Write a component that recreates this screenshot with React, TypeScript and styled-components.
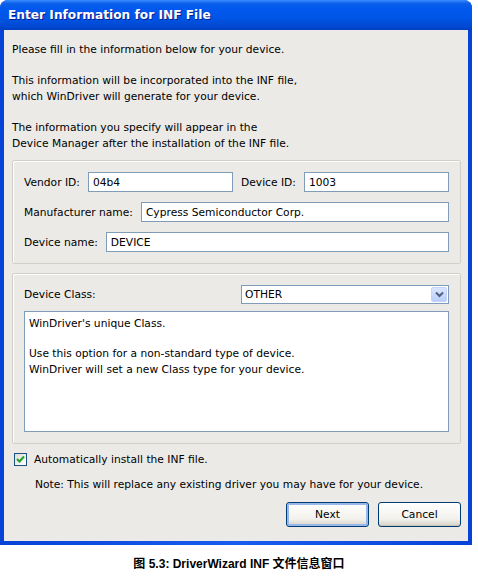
import styled, { createGlobalStyle } from 'styled-components';

const GlobalStyle = createGlobalStyle`
  html, body {
    margin: 0;
    padding: 0;
    background: #ffffff;
  }
  body {
    font-family: 'DejaVu Sans', Verdana, sans-serif;
    font-size: 10.7px;
    color: #000;
  }
`;

const Page = styled.div`
  width: 478px;
  height: 577px;
  display: flex;
  flex-direction: column;
`;

const Window = styled.div`
  width: 472px;
  border-radius: 8px 8px 0 0;
  background: linear-gradient(to right, #0742d6, #1a5cf0 50%, #0742d6);
  padding: 0 4px 4px 4px;
  box-sizing: border-box;
  display: flex;
  flex-direction: column;
`;

const TitleBar = styled.div`
  height: 30px;
  margin: 0 -4px;
  border-radius: 8px 8px 0 0;
  background: linear-gradient(
    to bottom,
    #3c8cff 0%,
    #0a5fe8 12%,
    #0058ee 30%,
    #0055e5 60%,
    #0049d2 88%,
    #003dc0 100%
  );
  display: flex;
  align-items: center;
  padding-left: 8px;
`;

const Title = styled.div`
  color: #ffffff;
  font-family: 'DejaVu Sans', Verdana, sans-serif;
  font-weight: bold;
  font-size: 12.2px;
  text-shadow: 1px 1px 0 #0a1e8c;
`;

const Client = styled.div`
  background: #ebeae7;
  padding: 12px 7px 14px 8px;
  display: flex;
  flex-direction: column;
`;

const Para = styled.p`
  margin: 0 0 15px 0;
  line-height: 16px;
  &:last-of-type {
    margin-bottom: 8px;
  }
`;

const Group = styled.div<{ $gap?: number }>`
  border: 1px solid #d0d0c8;
  box-shadow: inset 1px 1px 0 #ffffff;
  border-radius: 2px;
  padding: 11px;
  display: flex;
  flex-direction: column;
  gap: ${(p) => p.$gap ?? 10}px;
  margin-bottom: 9px;
`;

const Row = styled.div`
  display: flex;
  align-items: center;
  gap: 8px;
`;

const Label = styled.label`
  white-space: nowrap;
`;

const Input = styled.div`
  flex: 1;
  height: 20px;
  box-sizing: border-box;
  background: #ffffff;
  border: 1px solid #7f9db9;
  padding: 0 4px;
  display: flex;
  align-items: center;
`;

const ClassRow = styled.div`
  display: flex;
  align-items: center;
  justify-content: space-between;
`;

const Select = styled.div`
  width: 208px;
  height: 19px;
  box-sizing: border-box;
  background: #ffffff;
  border: 1px solid #7f9db9;
  display: flex;
  align-items: center;
  padding-left: 3px;
`;

const SelectText = styled.div`
  flex: 1;
`;

const DropButton = styled.div`
  width: 16px;
  height: 15px;
  margin-right: 1px;
  border-radius: 2px;
  background: linear-gradient(to bottom, #dbe6fd, #b9cef8);
  border: 1px solid #c3d3fd;
  box-sizing: border-box;
  display: flex;
  align-items: center;
  justify-content: center;
`;

const TextArea = styled.div`
  height: 121px;
  box-sizing: border-box;
  background: #ffffff;
  border: 1px solid #7f9db9;
  padding: 4px 4px;
  line-height: 16px;
`;

const Blank = styled.div`
  height: 14px;
`;

const CheckRow = styled.div`
  display: flex;
  align-items: center;
  gap: 7px;
  margin-left: 2px;
`;

const CheckBox = styled.div`
  width: 13px;
  height: 13px;
  box-sizing: border-box;
  border: 1px solid #1c5180;
  background: linear-gradient(135deg, #dcdcd7, #ffffff);
  display: flex;
  align-items: center;
  justify-content: center;
`;

const Note = styled.div`
  margin: 12px 0 0 23px;
`;

const Buttons = styled.div`
  display: flex;
  justify-content: flex-end;
  gap: 9px;
  margin-top: 11px;
`;

const Button = styled.div<{ $default?: boolean }>`
  width: 83px;
  height: 25px;
  box-sizing: border-box;
  border: 1px solid #003c74;
  border-radius: 3px;
  background: linear-gradient(to bottom, #ffffff, #f2f1ec 70%, #d6d0c5);
  box-shadow: ${(p) =>
    p.$default ? 'inset 0 0 0 2px #98b8ea' : 'inset 0 -1px 0 #c9c4b8'};
  display: flex;
  align-items: center;
  justify-content: center;
`;

const Caption = styled.div`
  flex: 1;
  display: flex;
  align-items: center;
  justify-content: center;
  font-weight: bold;
  font-size: 12px;
  font-family: 'Liberation Sans', 'Noto Sans CJK SC', sans-serif;
  padding-top: 2px;
`;

const ChevronDown = () => (
  <svg width="9" height="7" viewBox="0 0 9 7">
    <path d="M1 1.5 L4.5 5 L8 1.5" fill="none" stroke="#4d6185" strokeWidth="2" />
  </svg>
);

const Check = () => (
  <svg width="9" height="9" viewBox="0 0 9 9">
    <path d="M1 4 L3.5 6.5 L8 1.5" fill="none" stroke="#21a121" strokeWidth="2" />
  </svg>
);

const App = () => {
  return (
    <Page>
      <GlobalStyle />
      <Window>
        <TitleBar>
          <Title>Enter Information for INF File</Title>
        </TitleBar>
        <Client>
          <Para>Please fill in the information below for your device.</Para>
          <Para>
            This information will be incorporated into the INF file,
            <br />
            which WinDriver will generate for your device.
          </Para>
          <Para>
            The information you specify will appear in the
            <br />
            Device Manager after the installation of the INF file.
          </Para>

          <Group>
            <Row>
              <Label>Vendor ID:</Label>
              <Input>04b4</Input>
              <Label>Device ID:</Label>
              <Input>1003</Input>
            </Row>
            <Row>
              <Label>Manufacturer name:</Label>
              <Input>Cypress Semiconductor Corp.</Input>
            </Row>
            <Row>
              <Label>Device name:</Label>
              <Input>DEVICE</Input>
            </Row>
          </Group>

          <Group $gap={7}>
            <ClassRow>
              <Label>Device Class:</Label>
              <Select>
                <SelectText>OTHER</SelectText>
                <DropButton>
                  <ChevronDown />
                </DropButton>
              </Select>
            </ClassRow>
            <TextArea>
              WinDriver's unique Class.
              <Blank />
              Use this option for a non-standard type of device.
              <br />
              WinDriver will set a new Class type for your device.
            </TextArea>
          </Group>

          <CheckRow>
            <CheckBox>
              <Check />
            </CheckBox>
            <span>Automatically install the INF file.</span>
          </CheckRow>
          <Note>Note: This will replace any existing driver you may have for your device.</Note>

          <Buttons>
            <Button $default>Next</Button>
            <Button>Cancel</Button>
          </Buttons>
        </Client>
      </Window>
      <Caption>图 5.3: DriverWizard INF 文件信息窗口</Caption>
    </Page>
  );
};

export default App;
